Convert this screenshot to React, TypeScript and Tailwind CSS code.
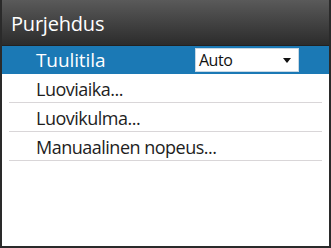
const items = ["Luoviaika...", "Luovikulma...", "Manuaalinen nopeus..."];

export default function App() {
  return (
    <div className="w-[331px] h-[248px] flex flex-col bg-white border-x-2 border-b-2 border-[#2a2a2a] font-['Open_Sans',sans-serif] overflow-hidden">
      {/* Title bar */}
      <div className="h-[46px] shrink-0 flex items-center pl-[9px] pt-[2px] bg-gradient-to-b from-[#5a5a5a] to-[#2c2c2c] border-b border-[#222]">
        <span className="text-white text-[20px] tracking-[-0.2px] leading-none">Purjehdus</span>
      </div>

      {/* Selected row */}
      <div className="h-[28px] shrink-0 flex items-center bg-[#1b79b5] pl-[34px] pr-[30px]">
        <span className="text-white text-[19px] tracking-[-0.1px] leading-none flex-1">Tuulitila</span>
        <div className="w-[104px] h-[24px] bg-white border border-[#c8d8e4] flex items-center justify-between pl-[3px] pr-[7px]">
          <span className="text-[#111] text-[16px] tracking-[-0.5px] leading-none">Auto</span>
          <svg width="8" height="5" viewBox="0 0 8 5">
            <path d="M0 0h8L4 5z" fill="#111" />
          </svg>
        </div>
      </div>

      {/* Menu items */}
      <div className="flex flex-col px-[7px]">
        {items.map((item) => (
          <div
            key={item}
            className="h-[29px] flex items-center border-b border-[#d9d6d8] pl-[27px] pt-[2px]"
          >
            <span className="text-[#1e1e1e] text-[18px] tracking-[-0.5px] leading-none">{item}</span>
          </div>
        ))}
      </div>
    </div>
  );
}
